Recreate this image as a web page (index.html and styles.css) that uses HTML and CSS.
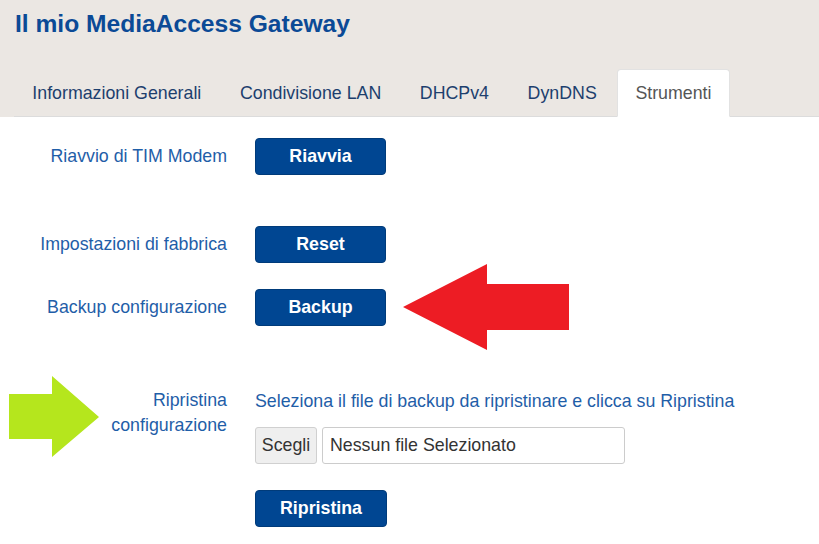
FILE: index.html
```html
<!DOCTYPE html>
<html lang="it">
<head>
<meta charset="utf-8">
<title>Il mio MediaAccess Gateway</title>
<link rel="stylesheet" href="styles.css">
</head>
<body>
<div class="page">
  <header class="header">
    <h1 class="title">Il mio MediaAccess Gateway</h1>
    <ul class="tabs">
      <li class="tab">Informazioni Generali</li>
      <li class="tab">Condivisione LAN</li>
      <li class="tab">DHCPv4</li>
      <li class="tab">DynDNS</li>
      <li class="tab active">Strumenti</li>
    </ul>
  </header>
  <main class="content">
    <div class="row row-reboot">
      <div class="label">Riavvio di TIM Modem</div>
      <div class="field"><button class="btn">Riavvia</button></div>
    </div>
    <div class="row row-reset">
      <div class="label">Impostazioni di fabbrica</div>
      <div class="field"><button class="btn">Reset</button></div>
    </div>
    <div class="row row-backup">
      <div class="label">Backup configurazione</div>
      <div class="field"><button class="btn">Backup</button></div>
    </div>
    <div class="row row-restore">
      <div class="label label-top">Ripristina<br>configurazione</div>
      <div class="field field-col">
        <div class="hint">Seleziona il file di backup da ripristinare e clicca su Ripristina</div>
        <div class="file">
          <span class="file-btn">Scegli</span>
          <span class="file-name">Nessun file Selezionato</span>
        </div>
        <button class="btn btn-wide">Ripristina</button>
      </div>
    </div>

    <svg class="arrow arrow-red" width="170" height="90" viewBox="0 0 170 90">
      <polygon points="0,43 84,0 84,20 166,20 166,66 84,66 84,86" fill="#ed1c24"/>
    </svg>
    <svg class="arrow arrow-green" width="92" height="84" viewBox="0 0 92 84">
      <polygon points="0,18 43,18 43,0 90,41 43,81 43,63 0,63" fill="#b5e61d"/>
    </svg>
  </main>
</div>
</body>
</html>
```
FILE: styles.css
```css
* { box-sizing: border-box; }
html, body {
  margin: 0;
  padding: 0;
  background: #ffffff;
}
body {
  font-family: "Liberation Sans", Arial, sans-serif;
  font-size: 17.8px;
}
.page {
  width: 819px;
  height: 544px;
  overflow: hidden;
  position: relative;
}
.header {
  background: #ebe7e3;
  padding: 9px 0 0 0;
}
.title {
  margin: 0;
  padding: 0 0 0 15px;
  font-size: 24.6px;
  line-height: 30px;
  font-weight: bold;
  color: #0b4a96;
}
.tabs {
  list-style: none;
  margin: 30px 0 0 14px;
  padding: 0;
  display: flex;
  border-bottom: 1px solid #dcdcdc;
}
.tab {
  margin: 0 2px -1px 0;
  padding: 13px 17.3px;
  line-height: 20px;
  border: 1px solid transparent;
  border-radius: 4px 4px 0 0;
  color: #1d3f6e;
}
.tab.active {
  background: #ffffff;
  border-color: #e2e2e2 #e2e2e2 transparent;
  color: #555555;
}
.content {
  position: relative;
  padding-top: 21px;
  height: 427px;
}
.row {
  display: grid;
  grid-template-columns: 227px 1fr;
  column-gap: 28px;
  align-items: center;
}
.row-reset { margin-top: 51px; }
.row-backup { margin-top: 26px; }
.row-restore { margin-top: 63px; align-items: start; }
.label {
  text-align: right;
  color: #1f5ea8;
  line-height: 25px;
}
.label-top { margin-top: -1px; }
.field { display: flex; }
.field-col {
  flex-direction: column;
  align-items: flex-start;
}
.btn {
  width: 131px;
  height: 37px;
  padding: 0;
  border: 1px solid #003b7a;
  border-radius: 4px;
  background: #004692;
  color: #ffffff;
  font-family: inherit;
  font-size: 17.8px;
  font-weight: bold;
}
.btn-wide { width: 132px; margin-top: 26px; }
.hint {
  color: #1f5ea8;
  line-height: 24px;
}
.file {
  display: flex;
  gap: 5px;
  margin-top: 14px;
}
.file-btn {
  width: 62px;
  height: 37px;
  line-height: 35px;
  text-align: center;
  background: #efefef;
  border: 1px solid #d0d0d0;
  border-radius: 3px;
  color: #333333;
}
.file-name {
  width: 303px;
  height: 37px;
  line-height: 35px;
  padding: 0 7px;
  border: 1px solid #cccccc;
  border-radius: 3px;
  color: #333333;
}
.arrow { position: absolute; }
.arrow-red { left: 403px; top: 147px; }
.arrow-green { left: 9px; top: 259px; }
```
